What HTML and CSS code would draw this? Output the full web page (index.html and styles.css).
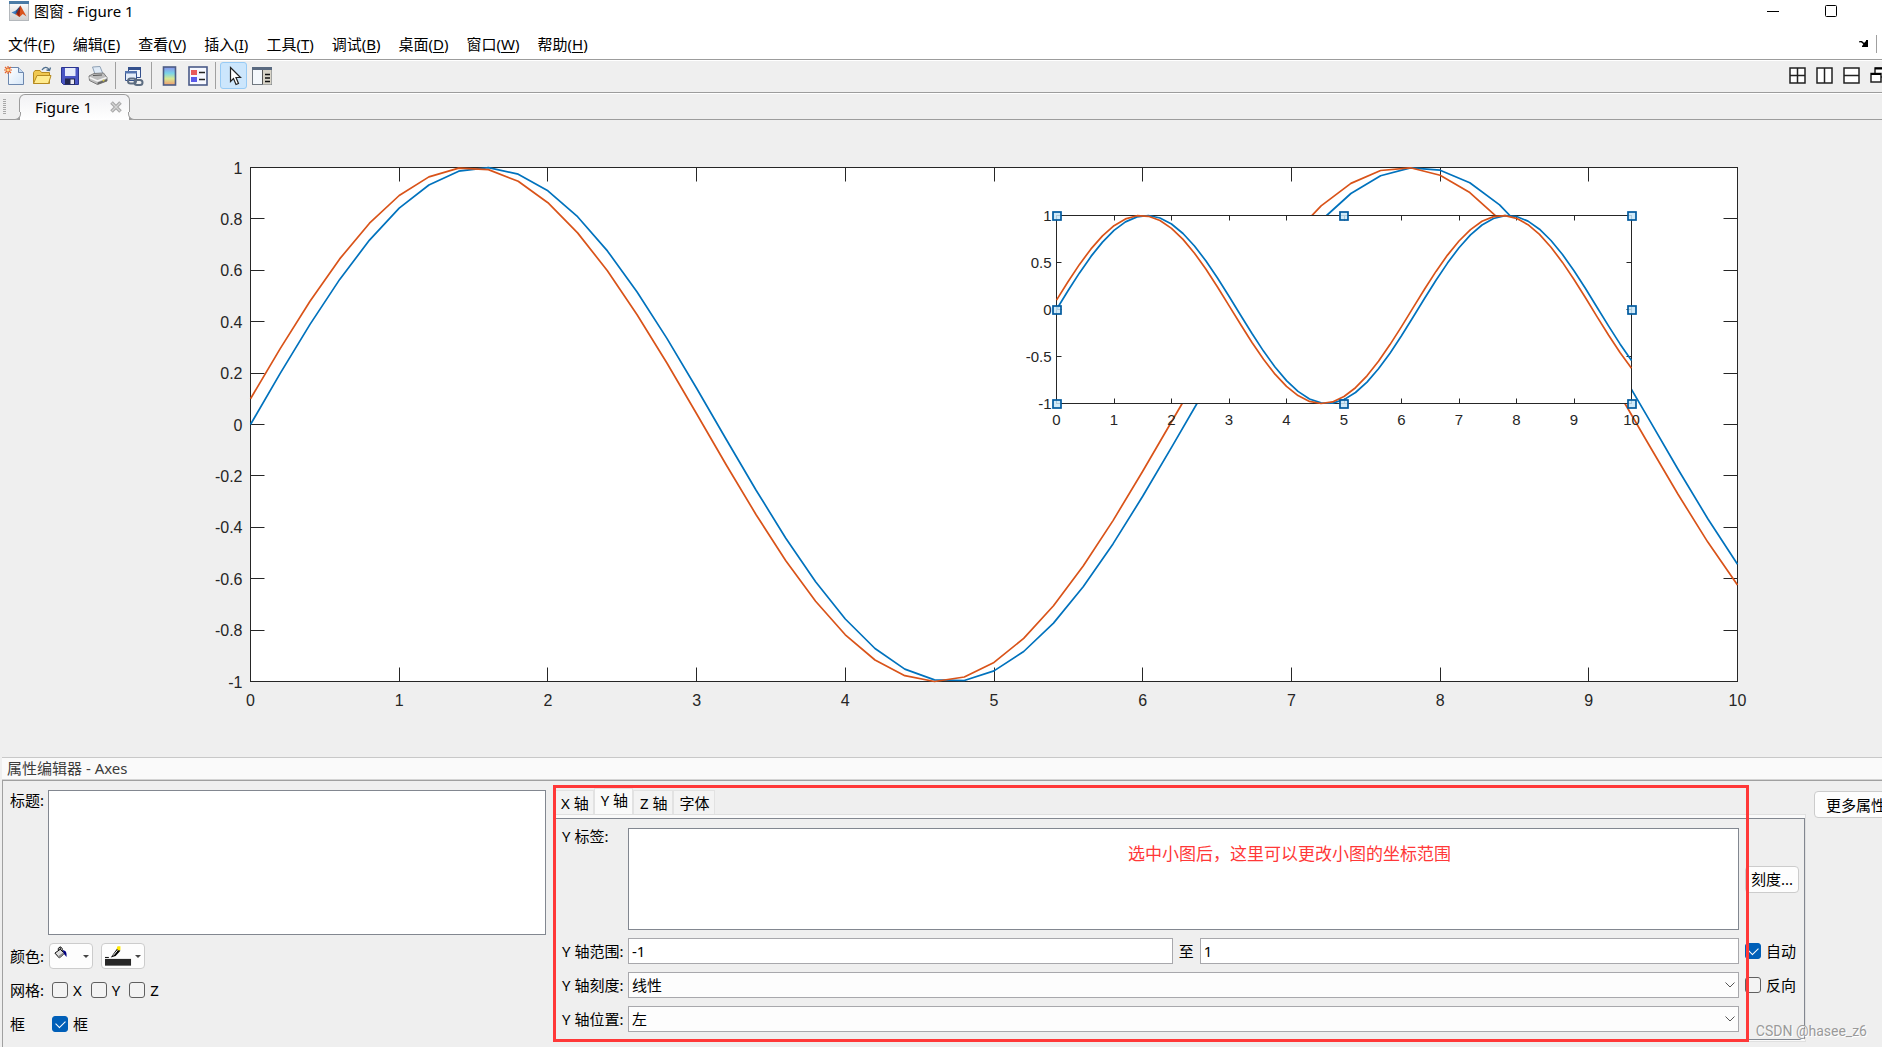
FILE: index.html
```html
<!DOCTYPE html>
<html lang="zh-CN">
<head>
<meta charset="utf-8">
<title>图窗 - Figure 1</title>
<link rel="stylesheet" href="styles.css">
</head>
<body>
<header class="titlebar">
  <svg class="icon20" viewBox="0 0 20 20" aria-hidden="true">
    <defs><linearGradient id="gApp" x1="0" y1="0" x2="0" y2="1"><stop offset="0" stop-color="#ffffff"/><stop offset="1" stop-color="#cfcfcf"/></linearGradient></defs>
    <rect x=".5" y=".5" width="19" height="19" fill="url(#gApp)" stroke="#b4b8bc"/>
    <rect x="0" y="0" width="20" height="3" fill="#4a7ba6"/>
    <path d="M2.5 11.5 7 9.5 9 11.2 6.5 13.5z" fill="#3f7fc0"/>
    <path d="M7 9.5 11.5 4.5 9 11.2 6.5 13.5z" fill="#274f86"/>
    <path d="M6.500 13.500 9 11 11.500 4.500 17.500 15.500 13.800 13 10.500 16z" fill="#d9541e"/>
    <path d="M11.500 4.500 10.800 12 10.500 16 7.500 12.500z" fill="#8e1f12"/>
  </svg>
  <h1 class="titlebar-text">图窗 - Figure 1</h1>
  <button class="win-btn win-min" aria-label="最小化"><svg width="12" height="12" viewBox="0 0 12 12"><path d="M0 6.500H12" stroke="#000" fill="none"/></svg></button>
  <button class="win-btn win-max" aria-label="最大化"><svg width="12" height="12" viewBox="0 0 12 12"><rect x=".5" y=".5" width="11" height="11" rx="1" stroke="#000" fill="none"/></svg></button>
</header>

<nav class="menubar">
  <button class="menu">文件(<u>F</u>)</button>
  <button class="menu">编辑(<u>E</u>)</button>
  <button class="menu">查看(<u>V</u>)</button>
  <button class="menu">插入(<u>I</u>)</button>
  <button class="menu">工具(<u>T</u>)</button>
  <button class="menu">调试(<u>B</u>)</button>
  <button class="menu">桌面(<u>D</u>)</button>
  <button class="menu">窗口(<u>W</u>)</button>
  <button class="menu">帮助(<u>H</u>)</button>
  <button class="dock" aria-label="停靠"><svg width="10" height="8" viewBox="0 0 10 8"><path d="M0 1.500C2 .5 3.500 1 5 3L7 1V0H9V7H3V6L4.300 4.500C3 2.500 2 2 0 2.500z" fill="#000"/></svg></button>
</nav>

<div class="toolbar">
  <button class="tool" aria-label="新建图窗"><svg class="icon20" viewBox="0 0 20 20">
    <defs><linearGradient id="gPage" x1="0" y1="0" x2="1" y2="1"><stop offset="0" stop-color="#fff"/><stop offset="1" stop-color="#d5e6f8"/></linearGradient></defs>
    <path d="M4.500 1.500H14.500L19.500 6.500V18.500H4.500z" fill="url(#gPage)" stroke="#6c87ae"/><path d="M14.500 1.500V6.500H19.500" fill="#c8dcf2" stroke="#6c87ae"/>
    <path d="M4 0V8M0 4H8M1 1 7 7M7 1 1 7" stroke="#e8642a" stroke-width="1.200"/><circle cx="4" cy="4" r="1.500" fill="#ffd98a"/></svg></button>
  <button class="tool" aria-label="打开"><svg class="icon20" viewBox="0 0 20 20">
    <path d="M1.500 17.500V6.500L3 4.500H8L9.500 6.500H17.500V17.500z" fill="#f0c850" stroke="#b68a20"/><path d="M1.500 17.500 5 9.500H19L16.500 17.500z" fill="#ffeb8e" stroke="#b68a20"/><path d="M10 4C12 .5 15.500.5 17 3.500M18.500 1.500 17.500 4.500 14.500 4" fill="none" stroke="#4c6c8c" stroke-width="1.300"/></svg></button>
  <button class="tool" aria-label="保存"><svg class="icon20" viewBox="0 0 20 20">
    <path d="M1.500 1.500H18.500V18.500H3.500L1.500 16.500z" fill="#4a56c4" stroke="#2b3590"/><path d="M5 2H15.500V10H5z" fill="#e6ecfa"/><path d="M5 12.500H15V18.500H5z" fill="#23284f"/><path d="M10.500 13.500H14V18H10.500z" fill="#e8e8f0"/></svg></button>
  <button class="tool" aria-label="打印"><svg class="icon20" viewBox="0 0 20 20">
    <path d="M4.500 1 12 .5 15 8 7.500 9.500z" fill="#dfeaf6" stroke="#8ea0b4"/><path d="M1 10 6 7.500 15.500 7 19 11.500V15L9.500 18.500 1.500 14.500z" fill="#bdbdbd" stroke="#7c7c7c"/><path d="M1.500 11.500 9.500 15 18.500 11.500" fill="none" stroke="#f4f4f4" stroke-width="1.500"/><path d="M5 9.500 14 9" stroke="#555"/><path d="M9.500 18.500 19 15V13L9.500 16.500z" fill="#666"/><circle cx="15.500" cy="14.500" r="1" fill="#d8c840"/></svg></button>
  <span class="sep"></span>
  <button class="tool" aria-label="链接绘图"><svg class="icon20" viewBox="0 0 20 20">
    <path d="M4.500 1.500H16.500V11.500H4.500z" fill="#eef4fc" stroke="#34508c"/><path d="M4 1H17V4H4z" fill="#34508c"/><path d="M1.500 5.500H12.500V14.500H1.500z" fill="#e4edf9" stroke="#34508c"/><path d="M1 5H13V7.500H1z" fill="#5474ae"/><g fill="none" stroke="#5c6c80" stroke-width="2"><rect x="4" y="12.500" width="8" height="5" rx="2.500"/><rect x="10.500" y="14" width="8" height="5" rx="2.500"/></g></svg></button>
  <span class="sep"></span>
  <button class="tool" aria-label="插入颜色栏"><svg class="icon20" viewBox="0 0 20 20">
    <defs><linearGradient id="gBar" x1="0" y1="0" x2="0" y2="1"><stop offset="0" stop-color="#8a90ea"/><stop offset=".35" stop-color="#7ad4e8"/><stop offset=".65" stop-color="#d8e890"/><stop offset="1" stop-color="#f09a70"/></linearGradient></defs>
    <rect x="3.500" y="1" width="12" height="18" fill="url(#gBar)" stroke="#4c5c84" stroke-width="1.600"/></svg></button>
  <button class="tool" aria-label="插入图例"><svg class="icon20" viewBox="0 0 20 20">
    <rect x="1" y="1" width="18" height="18" fill="#f6f8ff" stroke="#4a5a88" stroke-width="1.600"/><rect x="3" y="4" width="6" height="5" fill="#e85a5a"/><rect x="3" y="11" width="6" height="5" fill="#5a5ae8"/><path d="M11 6.500H17M11 13.500H17" stroke="#222" stroke-width="1.400"/></svg></button>
  <span class="sep"></span>
  <button class="tool tool-on" aria-label="编辑绘图" aria-pressed="true"><svg class="icon20" viewBox="0 0 20 20">
    <path d="M6.500 1.500V15.500L9.500 12.500L12 18.500L14.500 17.500L12 11.500H16.500z" fill="#fff" stroke="#222" stroke-width="1.200"/></svg></button>
  <button class="tool" aria-label="打开属性检查器"><svg class="icon20" viewBox="0 0 20 20">
    <rect x=".5" y="1.500" width="19" height="17" fill="#f4f8fc" stroke="#707880"/><rect x="0" y="1" width="20" height="3" fill="#5a6a80"/><rect x="11" y="4" width="8.500" height="14.500" fill="#d8d4c8"/><path d="M10.500 4V18" stroke="#555"/><path d="M13 8.500H18M13 12H18M13 15.500H18" stroke="#111" stroke-width="1.300"/></svg></button>
  <span class="layout-tools">
    <button class="layout-btn" aria-label="平铺"><svg width="17" height="17" viewBox="0 0 17 17"><path d="M1 1H16V16H1zM8.500 1V16M1 8.500H16" fill="#fff" stroke="#222" stroke-width="1.500"/></svg></button>
    <button class="layout-btn" aria-label="左右平铺"><svg width="17" height="17" viewBox="0 0 17 17"><path d="M1 1H16V16H1zM8.500 1V16" fill="#fff" stroke="#222" stroke-width="1.500"/></svg></button>
    <button class="layout-btn" aria-label="上下平铺"><svg width="17" height="17" viewBox="0 0 17 17"><path d="M1 1H16V16H1zM1 8.500H16" fill="#fff" stroke="#222" stroke-width="1.500"/></svg></button>
    <button class="layout-btn" aria-label="浮动"><svg width="17" height="17" viewBox="0 0 17 17"><path d="M5 1H16V10H5z" fill="#fff" stroke="#222" stroke-width="1.500"/><path d="M5 1.500H16" stroke="#000" stroke-width="2"/><path d="M1 6.500H11V15H1z" fill="#fff" stroke="#222" stroke-width="1.500"/><path d="M1 7H11" stroke="#000" stroke-width="2"/></svg></button>
  </span>
</div>

<div class="doc-tabs">
  <span class="grip"></span>
  <div class="doc-tab"><span>Figure 1</span>
    <button class="tab-close" aria-label="关闭"><svg width="12" height="12" viewBox="0 0 12 12"><path d="M1.500 1.500 10.500 10.500M10.500 1.500 1.500 10.500" stroke="#a8a8a8" stroke-width="3.600"/><path d="M2 2 10 10M10 2 2 10" stroke="#d4d4d4" stroke-width="1.200"/></svg></button>
  </div>
</div>

<main class="figure">
  <svg class="plot" id="plot" role="img" aria-label="sin(x) 与 sin(x+0.1) 的曲线"></svg>
</main>

<section class="editor">
  <h2 class="editor-title">属性编辑器 - Axes</h2>
  <div class="editor-body">
    <div class="general">
      <label class="label-top" for="title">标题:</label>
      <textarea id="title" class="area"></textarea>
      <span>颜色:</span>
      <div class="row swatches">
        <button class="swatch" aria-label="背景颜色">
          <svg width="28" height="20" viewBox="0 0 28 20"><path d="M7.500 1V7M5.500 4V2L7.500 .5 9.500 2V5" fill="none" stroke="#000"/><path d="M2 7 7.500 3 12 7.500 6.500 12z" fill="#ddd" stroke="#000"/><path d="M5 10.500 11 6 12 8 6.500 12z" fill="#888"/><path d="M10 4C13 4 14.500 6 14 11L11.500 8z" fill="#000080"/></svg>
          <span class="caret"></span></button>
        <button class="swatch" aria-label="线条颜色">
          <svg width="28" height="20" viewBox="0 0 28 20"><rect x="0" y="13" width="27" height="7" fill="#262626"/><path d="M0 11.500H4" stroke="#000"/><path d="M12.500 2.500 16 4.500 11 10 6 11.500 8.500 8z" fill="#000"/><path d="M8.500 9.500 13 4" stroke="#fff"/><path d="M13 0H16V3L14.500 4.500 12 2.500z" fill="#ffe800"/></svg>
          <span class="caret"></span></button>
      </div>
      <span>网格:</span>
      <div class="row checks">
        <label class="check"><input type="checkbox">X</label>
        <label class="check"><input type="checkbox">Y</label>
        <label class="check"><input type="checkbox">Z</label>
      </div>
      <span>框</span>
      <div class="row checks">
        <label class="check"><input type="checkbox" checked>框</label>
      </div>
    </div>

    <div class="axes">
      <div class="axis-tabs" role="tablist">
        <button class="axis-tab" role="tab">X 轴</button>
        <button class="axis-tab axis-tab-on" role="tab" aria-selected="true">Y 轴</button>
        <button class="axis-tab" role="tab">Z 轴</button>
        <button class="axis-tab" role="tab">字体</button>
      </div>
      <div class="pane"><div class="pane-inner">
        <label class="label-top label-tight" for="ylabel">Y 标签:</label>
        <div class="noted">
          <textarea id="ylabel" class="area"></textarea>
          <p class="note">选中小图后，这里可以更改小图的坐标范围</p>
        </div>
        <button class="btn">刻度...</button>

        <label for="ymin">Y 轴范围:</label>
        <div class="row range">
          <input id="ymin" class="field" type="text" value="-1">
          <label for="ymax">至</label>
          <input id="ymax" class="field" type="text" value="1">
        </div>
        <label class="check"><input type="checkbox" checked>自动</label>

        <label for="yscale">Y 轴刻度:</label>
        <div class="select"><select id="yscale" class="field"><option>线性</option><option>对数</option></select><svg class="chevron" width="10" height="6" viewBox="0 0 10 6"><path d="M.5.5 5 5 9.500.5" fill="none" stroke="#555"/></svg></div>
        <label class="check"><input type="checkbox">反向</label>

        <label for="ypos">Y 轴位置:</label>
        <div class="select"><select id="ypos" class="field"><option>左</option><option>右</option></select><svg class="chevron" width="10" height="6" viewBox="0 0 10 6"><path d="M.5.5 5 5 9.500.5" fill="none" stroke="#555"/></svg></div>
      </div></div>
      <div class="highlight"></div>
    </div>

    <div class="more"><button class="btn btn-more">更多属性...</button></div>
  </div>
  <span class="watermark">CSDN @hasee_z6</span>
</section>
<script src="plot.js"></script>
</body>
</html>
```

FILE: styles.css
```css
* { box-sizing: border-box; }

body {
  margin: 0;
  min-height: 100vh;
  display: flex;
  flex-direction: column;
  overflow-x: hidden;
  background: #efefef;
  color: #000;
  font: 15px/20px "Noto Sans", "Noto Sans CJK SC", sans-serif;
}

button, input, select, textarea { font: inherit; color: inherit; }
button { margin: 0; padding: 0; border: 0; background: none; white-space: nowrap; }
svg { display: block; }
.icon20 { width: 20px; height: 20px; }

/* title bar and menus */
.titlebar {
  display: flex;
  align-items: center;
  height: 22px;
  padding-left: 9px;
  background: #fff;
}
.titlebar-text { flex: 1; margin: 0 0 0 5px; font-size: 15px; font-weight: 400; }
.win-btn { width: 12px; height: 12px; }
.win-min { margin-right: 46px; }
.win-max { margin-right: 45px; }

.menubar {
  display: flex;
  align-items: center;
  gap: 18px;
  height: 38px;
  padding: 11px 5px 4px 8px;
  background: #fff;
  border-bottom: 1px solid #9c9c9c;
}
.menu u { text-underline-offset: 2px; }
.dock { margin-left: auto; padding: 5px 7px 5px 0; border-right: 1px solid #a0a0a0; }

/* toolbar */
.toolbar {
  display: flex;
  align-items: center;
  gap: 1px;
  height: 33px;
  padding-bottom: 2px;
  overflow: hidden;
  border-top: 1px solid #fff;
  border-bottom: 1px solid #9c9c9c;
}
.tool { display: grid; place-items: center; flex: none; width: 27px; height: 27px; border-radius: 3px; }
.tool-on { background: #cce6fc; border: 1px solid #98cbf5; }
.sep { width: 1px; height: 27px; margin: 0 3px; background: #a0a0a0; }
.layout-tools { display: flex; gap: 10px; width: 93px; margin-left: auto; }
.layout-btn { flex: none; }

/* document tabs */
.doc-tabs {
  display: flex;
  align-items: flex-end;
  height: 27px;
  padding-left: 3px;
  border-top: 1px solid #fff;
  border-bottom: 1px solid #9c9c9c;
}
.grip {
  align-self: center;
  width: 3px;
  height: 16px;
  margin-right: 13px;
  background: repeating-linear-gradient(#a8a8a8 0 1px, transparent 1px 2px);
}
.doc-tab {
  position: relative;
  display: flex;
  align-items: center;
  gap: 18px;
  height: 26px;
  margin-bottom: -1px;
  padding: 0 7px 2px 15px;
  border: 1px solid #9c9c9c;
  border-bottom: 0;
  border-radius: 6px 6px 0 0;
  background: linear-gradient(#f2f2f4, #fff);
}
.doc-tab::before, .doc-tab::after {
  content: "";
  position: absolute;
  bottom: 0;
  width: 6px;
  height: 7px;
  border-bottom: 1px solid #9c9c9c;
}
.doc-tab::before { left: -6px; border-right: 1px solid #9c9c9c; border-bottom-right-radius: 6px; background: #efefef; }
.doc-tab::after { right: -6px; border-left: 1px solid #9c9c9c; border-bottom-left-radius: 6px; background: #efefef; }

/* figure */
.figure { flex: 1; min-height: 300px; display: flex; }
.plot { flex: 1; width: 100%; }
.plot text { font-family: "Liberation Sans", Arial, sans-serif; fill: #262626; }
.plot .big { font-size: 16px; }
.plot .small { font-size: 15px; }
.plot .left { text-anchor: end; }
.plot .below { text-anchor: middle; }
.box { fill: #fff; stroke: #262626; }
.tick { stroke: #262626; fill: none; }
.curve { fill: none; stroke-width: 1.700; stroke-linejoin: round; }
.blue { stroke: #0072bd; }
.orange { stroke: #d95319; }
.handle { fill: #c8e6f8; fill-opacity: .85; stroke: #005a9e; stroke-width: 1.700; }

/* property editor */
.editor { position: relative; margin-left: 2px; overflow: hidden; border-top: 1px solid #c8c8c8; }
.editor-title {
  margin: 0;
  height: 22px;
  padding-left: 5px;
  background: #fafafa;
  border-bottom: 1px solid #d4d4d4;
  color: #3c3c3c;
  font-size: 15px;
  font-weight: 400;
}
.editor-body {
  display: grid;
  grid-template-columns: minmax(0, 543fr) minmax(0, 1252fr) 68px;
  gap: 8px;
  padding: 7px 0 5px 0;
  border-top: 1px solid #a0a0a0;
  border-left: 1px solid #a0a0a0;
}

.general {
  display: grid;
  grid-template-columns: 38px minmax(0, 1fr);
  grid-template-rows: 145px 26px 26px 26px;
  align-items: center;
  row-gap: 8px;
  padding: 2px 0 0 7px;
}
.label-top { align-self: start; }
.label-tight { line-height: 16px; }
.row { display: flex; align-items: center; }
.area {
  display: block;
  width: 100%;
  height: 100%;
  margin: 0;
  padding: 2px;
  border: 1px solid #828790;
  background: #fff;
  resize: none;
}
.swatches { gap: 8px; padding-left: 1px; }
.swatch {
  display: flex;
  align-items: center;
  gap: 3px;
  width: 44px;
  height: 26px;
  padding: 0 3px;
  border: 1px solid #ccc;
  border-radius: 4px;
  background: #fdfdfd;
}
.caret { border: 3px solid transparent; border-top-color: #444; border-bottom: 0; }
.checks { gap: 9px; padding-left: 4px; }
.check { display: flex; align-items: center; gap: 5px; white-space: nowrap; }
.check input {
  appearance: none;
  display: grid;
  place-items: center;
  flex: none;
  width: 16px;
  height: 16px;
  margin: 0;
  border: 1px solid #606060;
  border-radius: 3px;
  background: #f3f3f3;
}
.check input:checked { border-color: #005fb8; background: #005fb8; }
.check input:checked::before {
  content: "";
  width: 8px;
  height: 5px;
  margin-bottom: 3px;
  border: solid #fff;
  border-width: 0 0 1px 1px;
  transform: rotate(-45deg);
}

.axes { position: relative; }
.axis-tabs { display: flex; align-items: flex-end; height: 26px; }
.axis-tab {
  height: 24px;
  padding: 0 4px 0 6px;
  border: 1px solid #e2e2e2;
  border-bottom: 0;
  background: #f3f3f3;
}
.axis-tab-on { height: 26px; padding-bottom: 4px; background: #fafafa; }
.pane { padding: 3px 0 1px 1px; border: 1px solid #e0e0e0; border-left: 0; background: #fafafa; }
.pane-inner {
  display: grid;
  grid-template-columns: 60px minmax(0, 1fr) 54px;
  grid-template-rows: 102px 26px 26px 26px;
  align-items: center;
  gap: 8px 6px;
  padding: 9px 5px 7px 6px;
  border: 1px solid #828790;
  background: #efefef;
  white-space: nowrap;
}
.noted { position: relative; height: 100%; }
.note {
  position: absolute;
  left: 45%;
  top: 14px;
  margin: 0;
  color: #ff3838;
  font-size: 17px;
  line-height: 24px;
}
.range { gap: 6px; }
.range .field { flex: 100 1 0; }
.range .field:first-child { flex-grow: 101; }
.field {
  width: 100%;
  min-width: 0;
  height: 26px;
  padding: 0 3px;
  border: 1px solid #a8a8ac;
  border-radius: 0;
  background: #fff;
}
.select { position: relative; }
.select .field { display: block; appearance: none; background: #fdfdfd; }
.chevron { position: absolute; right: 4px; top: 10px; pointer-events: none; }
.btn {
  height: 27px;
  border: 1px solid #ccc;
  border-radius: 4px;
  background: #fdfdfd;
}
.btn-more { padding: 0 11px; }
.more { padding-top: 3px; }
.highlight {
  position: absolute;
  inset: -3px 57px 0 -1px;
  border: 3px solid #ff3838;
  pointer-events: none;
}
.watermark {
  position: absolute;
  right: 15px;
  bottom: 6px;
  color: #9a9a9a;
  font: 14px/20px Roboto, sans-serif;
  text-shadow: 1px 1px 0 #fff;
}
```

FILE: plot.js
```js
const SVG = "http://www.w3.org/2000/svg";
const plot = document.getElementById("plot");

function add(name, attrs, text) {
  const el = document.createElementNS(SVG, name);
  for (const key in attrs) el.setAttribute(key, attrs[key]);
  if (text !== undefined) el.textContent = text;
  plot.appendChild(el);
}

// Pixel-centre coordinate, so that one-pixel lines stay sharp.
const snap = v => Math.floor(v) + 0.5;

function axes(o) {
  const { left, right, top, bottom, len, step, size } = o;
  const px = x => left + (right - left) * x / 10;
  const py = y => bottom - (bottom - top) * (y + 1) / 2;

  add("rect", { class: "box", x: left, y: top, width: right - left, height: bottom - top });

  let ticks = "";
  for (let x = 1; x < 10; x++) {
    const p = snap(px(x));
    ticks += `M${p} ${bottom}v${-len}M${p} ${top}v${len}`;
  }
  const n = Math.round(2 / step);
  for (let i = 1; i < n; i++) {
    const p = snap(py(-1 + i * step));
    ticks += `M${left} ${p}h${len}M${right} ${p}h${-len}`;
  }
  add("path", { class: "tick", d: ticks });

  for (const [cls, shift] of [["blue", 0], ["orange", 0.1]]) {
    const pts = [];
    for (let i = 0; i <= 50; i++) {
      const x = i / 5;
      pts.push(px(x).toFixed(1) + "," + py(Math.sin(x + shift)).toFixed(1));
    }
    add("polyline", { class: "curve " + cls, points: pts.join(" ") });
  }

  for (let i = 0; i <= n; i++) {
    const y = -1 + i * step;
    add("text", { class: size + " left", x: left - o.gapX, y: py(y) + o.drop }, String(+y.toFixed(1) || 0));
  }
  for (let x = 0; x <= 10; x++) {
    add("text", { class: size + " below", x: px(x), y: bottom + o.gapY }, String(x));
  }
}

function draw() {
  const w = plot.clientWidth, h = plot.clientHeight;
  plot.replaceChildren();
  axes({ left: snap(w * 0.1330), right: snap(w * 0.9234), top: snap(h * 0.0740), bottom: snap(h * 0.8815),
         len: 14, step: 0.2, size: "big", gapX: 8, gapY: 24, drop: 6 });

  const inset = { left: snap(w * 0.5613), right: snap(w * 0.8670), top: snap(h * 0.1500), bottom: snap(h * 0.4453),
                  len: 5, step: 0.5, size: "small", gapX: 5, gapY: 21, drop: 5 };
  axes(inset);

  const mx = (inset.left + inset.right) / 2, my = (inset.top + inset.bottom) / 2;
  for (const x of [inset.left, mx, inset.right])
    for (const y of [inset.top, my, inset.bottom])
      if (x !== mx || y !== my)
        add("rect", { class: "handle", x: Math.round(x) - 4, y: Math.round(y) - 4, width: 8, height: 8 });
}

draw();
window.addEventListener("resize", draw);
```
